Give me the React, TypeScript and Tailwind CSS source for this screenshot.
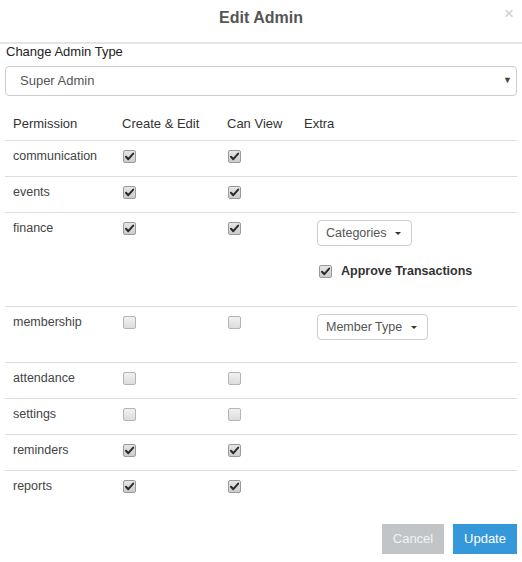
import React from "react";

function Box({ checked }: { checked: boolean }) {
  return (
    <span
      className={
        "inline-flex h-[13px] w-[13px] items-center justify-center rounded-[2px] border " +
        (checked
          ? "border-[#9a9a9a] bg-[linear-gradient(#e6e6e6,#cccccc)]"
          : "border-[#b4b4b4] bg-[linear-gradient(#f1f1f1,#dcdcdc)]")
      }
    >
      {checked && (
        <svg width="11" height="11" viewBox="0 0 11 11">
          <path d="M2 5.8 L4.3 8.2 L9.2 2.6" fill="none" stroke="#2b2b2b" strokeWidth="2" strokeLinecap="round" strokeLinejoin="round" />
        </svg>
      )}
    </span>
  );
}

function DropBtn({ label }: { label: string }) {
  return (
    <span className="inline-flex h-[26px] items-center rounded-[4px] border border-[#cccccc] bg-white pl-[8px] pr-[10px] text-[12.5px] text-[#555]">
      {label}
      <span className="ml-[9px] inline-block h-0 w-0 border-x-[3.5px] border-t-[3.5px] border-x-transparent border-t-[#333]" />
    </span>
  );
}

type Row = { name: string; ce: boolean; cv: boolean; extra?: "finance" | "membership"; h: string };

const rows: Row[] = [
  { name: "communication", ce: true, cv: true, h: "h-[36px]" },
  { name: "events", ce: true, cv: true, h: "h-[36px]" },
  { name: "finance", ce: true, cv: true, extra: "finance", h: "h-[94px]" },
  { name: "membership", ce: false, cv: false, extra: "membership", h: "h-[56px]" },
  { name: "attendance", ce: false, cv: false, h: "h-[36px]" },
  { name: "settings", ce: false, cv: false, h: "h-[36px]" },
  { name: "reminders", ce: true, cv: true, h: "h-[36px]" },
  { name: "reports", ce: true, cv: true, h: "h-[36px]" },
];

export default function App() {
  return (
    <div className="h-[562px] w-[522px] bg-white text-[13px] text-[#333]" style={{ fontFamily: '"Liberation Sans", Arial, sans-serif' }}>
      <div className="relative h-[44px] border-b-2 border-[#e5e5e5]">
        <div className="pt-[8px] text-center text-[16px] font-bold leading-[20px] text-[#555]">Edit Admin</div>
        <span className="absolute right-[8px] top-[5px] text-[17px] leading-[17px] text-[#cccccc]">×</span>
      </div>
      <div className="px-[5px]">
        <div className="pl-[1px] leading-[16px] text-[#222]">Change Admin Type</div>
        <div className="mt-[6px] flex h-[30px] items-center justify-between rounded-[4px] border border-[#cccccc] pl-[14px] pr-[4px] text-[#555]">
          <span>Super Admin</span>
          <span className="text-[9px] text-[#444]">▼</span>
        </div>
        <div className="mt-[12px]">
          <div className="grid h-[32px] grid-cols-[109px_105px_77px_1fr] items-center text-[#333]">
            <div className="pl-[8px]">Permission</div>
            <div className="pl-[8px]">Create &amp; Edit</div>
            <div className="pl-[8px]">Can View</div>
            <div className="pl-[8px]">Extra</div>
          </div>
          {rows.map((r) => (
            <div
              key={r.name}
              className={"grid grid-cols-[109px_105px_77px_1fr] items-start border-t border-[#dddddd] " + r.h}
            >
              <div className="pl-[8px] pt-[6px] text-[12.5px] leading-[18px] text-[#444]">{r.name}</div>
              <div className="pl-[9px] pt-[9px] leading-none">
                <Box checked={r.ce} />
              </div>
              <div className="pl-[9px] pt-[9px] leading-none">
                <Box checked={r.cv} />
              </div>
              <div className="pl-[21px]">
                {r.extra === "finance" && (
                  <div className="pt-[7px]">
                    <DropBtn label="Categories" />
                    <div className="mt-[16px] flex items-center pl-[2px]">
                      <Box checked />
                      <span className="ml-[9px] text-[12.5px] font-bold text-[#333]">Approve Transactions</span>
                    </div>
                  </div>
                )}
                {r.extra === "membership" && (
                  <div className="pt-[7px]">
                    <DropBtn label="Member Type" />
                  </div>
                )}
              </div>
            </div>
          ))}
        </div>
        <div className="mt-[18px] flex justify-end gap-[9px]">
          <button className="h-[30px] w-[62px] bg-[#c1c5c8] text-[13px] text-[#f2f2f2]">Cancel</button>
          <button className="h-[30px] w-[64px] bg-[#3498db] text-[13px] text-white">Update</button>
        </div>
      </div>
    </div>
  );
}
